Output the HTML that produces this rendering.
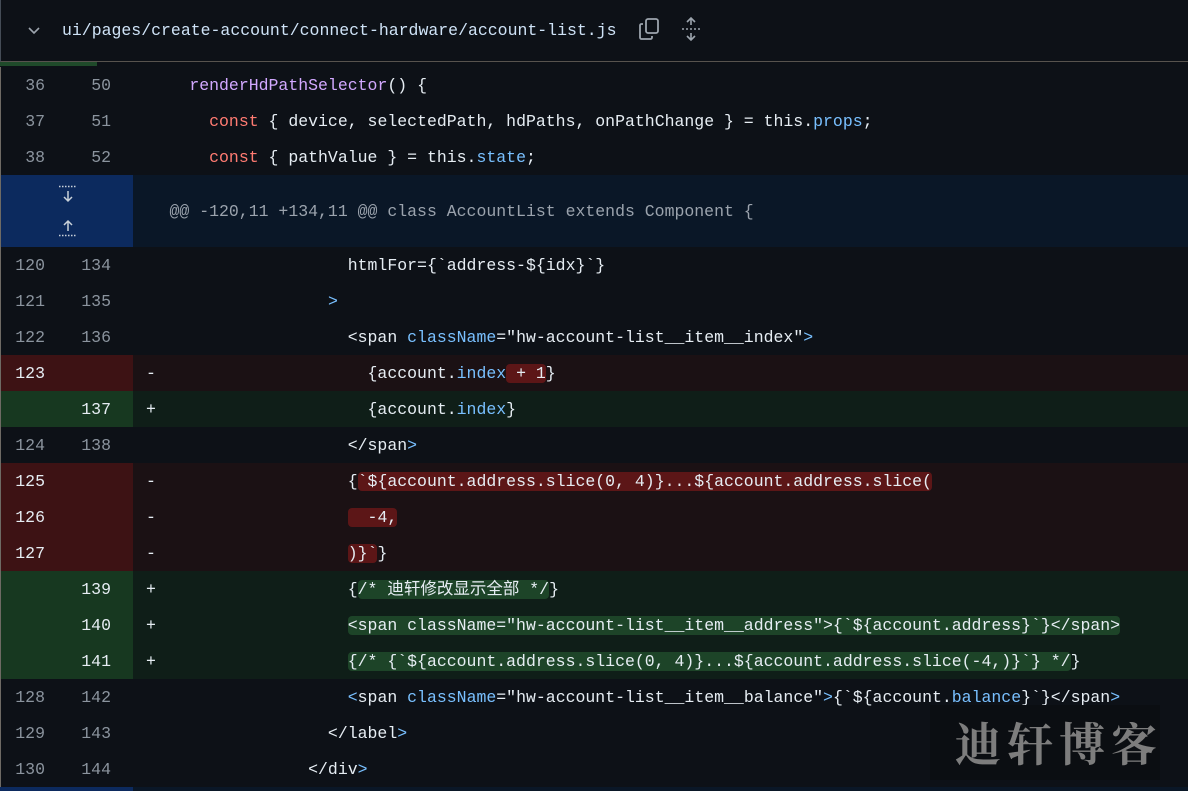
<!DOCTYPE html><html><head><meta charset="utf-8"><style>
body{margin:0;width:1188px;height:791px;background:#0d1117;overflow:hidden;font-family:"Liberation Mono","Noto Sans CJK SC",monospace;font-size:16.5px;color:#e6edf3;position:relative}
.hdr{position:absolute;left:0;top:0;width:1188px;height:62px;background:#0d1117;border-left:1px solid #444c56;border-bottom:1px solid #57534e;box-sizing:border-box}
.r{position:absolute;left:0;width:1188px;height:36px;line-height:38px;border-left:1px solid #6e6a64;box-sizing:border-box}
.o,.n{position:absolute;top:0;width:60px;text-align:right;color:#8b949e}
.o{left:-16px}.n{left:50px}
.g{position:absolute;left:0;top:0;width:132px;height:100%}
.s{position:absolute;left:145px}
.c{position:absolute;left:168.5px;white-space:pre}
.del .g{background:#3d1214}.del{background:#1b1114}.del .o,.del .n{color:#e6edf3}
.add .g{background:#173820}.add{background:#0f1e18}.add .o,.add .n{color:#e6edf3}
.hd{background:#5c1617;border-radius:4px}
.ha{background:#1d4428;border-radius:4px}
.p{color:#d2a8ff}.k{color:#ff7b72}.b{color:#79c0ff}
</style></head><body>
<div class="hdr">
<svg style="position:absolute;left:25px;top:22px" width="16" height="16" viewBox="0 0 16 16"><path d="M3 6l5 5 5-5" fill="none" stroke="#9da5ae" stroke-width="1.6"/></svg>
<div style="position:absolute;left:61px;top:18px;line-height:26px;color:#cfe3f7">ui/pages/create-account/connect-hardware/account-list.js</div>
<svg style="position:absolute;left:636px;top:17px" width="24" height="24" viewBox="0 0 24 24" fill="none" stroke="#9da5ae" stroke-width="1.8"><rect x="9" y="2" width="12" height="14" rx="2"/><path d="M6 7H4.5A1.5 1.5 0 0 0 3 8.5v12A1.5 1.5 0 0 0 4.5 22h9a1.5 1.5 0 0 0 1.5-1.5V19"/></svg>
<svg style="position:absolute;left:679px;top:16px" width="22" height="26" viewBox="0 0 22 26" fill="none" stroke="#9da5ae" stroke-width="1.6"><path d="M11 2v7M7 6l4-4 4 4M11 24v-7M7 20l4 4 4-4"/><path d="M2 13h18" stroke-dasharray="2 2"/></svg>
</div>
<div style="position:absolute;left:0;top:62px;width:97px;height:4px;background:#1f4a2a"></div>
<div class="r" style="top:67px"><span class="o">36</span><span class="n">50</span><span class="c">  <span class="p">renderHdPathSelector</span>() {</span></div>
<div class="r" style="top:103px"><span class="o">37</span><span class="n">51</span><span class="c">    <span class="k">const</span> { device, selectedPath, hdPaths, onPathChange } = this.<span class="b">props</span>;</span></div>
<div class="r" style="top:139px"><span class="o">38</span><span class="n">52</span><span class="c">    <span class="k">const</span> { pathValue } = this.<span class="b">state</span>;</span></div>
<div class="r" style="top:175px;height:72px;background:#0a1727"><div class="g" style="background:#0c2a5e"></div>
<svg style="position:absolute;left:56px;top:10px" width="22" height="52" viewBox="0 0 22 52" fill="none" stroke="#c9d1d9" stroke-width="1.5"><path d="M2 1.5h18" stroke-dasharray="1.5 1.5"/><path d="M11 6v10M7 12l4 4 4-4"/><path d="M11 46v-10M7 40l4-4 4 4"/><path d="M2 50.5h18" stroke-dasharray="1.5 1.5"/></svg>
<span class="c" style="line-height:74px;color:#9ba3ad">@@ -120,11 +134,11 @@ class AccountList extends Component {</span></div>
<div class="r" style="top:247px"><span class="o">120</span><span class="n">134</span><span class="c">                  htmlFor={`address-${idx}`}</span></div>
<div class="r" style="top:283px"><span class="o">121</span><span class="n">135</span><span class="c">                <span class="b">&gt;</span></span></div>
<div class="r" style="top:319px"><span class="o">122</span><span class="n">136</span><span class="c">                  &lt;span <span class="b">className</span>="hw-account-list__item__index"<span class="b">&gt;</span></span></div>
<div class="r del" style="top:355px"><div class="g"></div><span class="o">123</span><span class="s">-</span><span class="c">                    {account.<span class="b">index</span><span class="hd"> + 1</span>}</span></div>
<div class="r add" style="top:391px"><div class="g"></div><span class="n">137</span><span class="s">+</span><span class="c">                    {account.<span class="b">index</span>}</span></div>
<div class="r" style="top:427px"><span class="o">124</span><span class="n">138</span><span class="c">                  &lt;/span<span class="b">&gt;</span></span></div>
<div class="r del" style="top:463px"><div class="g"></div><span class="o">125</span><span class="s">-</span><span class="c">                  {<span class="hd">`${account.address.slice(0, 4)}...${account.address.slice(</span></span></div>
<div class="r del" style="top:499px"><div class="g"></div><span class="o">126</span><span class="s">-</span><span class="c">                  <span class="hd">  -4,</span></span></div>
<div class="r del" style="top:535px"><div class="g"></div><span class="o">127</span><span class="s">-</span><span class="c">                  <span class="hd">)}`</span>}</span></div>
<div class="r add" style="top:571px"><div class="g"></div><span class="n">139</span><span class="s">+</span><span class="c">                  {<span class="ha">/* 迪轩修改显示全部 */</span>}</span></div>
<div class="r add" style="top:607px"><div class="g"></div><span class="n">140</span><span class="s">+</span><span class="c">                  <span class="ha">&lt;span className="hw-account-list__item__address"&gt;{`${account.address}`}&lt;/span&gt;</span></span></div>
<div class="r add" style="top:643px"><div class="g"></div><span class="n">141</span><span class="s">+</span><span class="c">                  <span class="ha">{/* {`${account.address.slice(0, 4)}...${account.address.slice(-4,)}`} */</span>}</span></div>
<div class="r" style="top:679px"><span class="o">128</span><span class="n">142</span><span class="c">                  <span class="b">&lt;</span>span <span class="b">className</span>="hw-account-list__item__balance"<span class="b">&gt;</span>{`${account.<span class="b">balance</span>}`}&lt;/span<span class="b">&gt;</span></span></div>
<div class="r" style="top:715px"><span class="o">129</span><span class="n">143</span><span class="c">                &lt;/label<span class="b">&gt;</span></span></div>
<div class="r" style="top:751px"><span class="o">130</span><span class="n">144</span><span class="c">              &lt;/div<span class="b">&gt;</span></span></div>
<div style="position:absolute;left:0;top:787px;width:133px;height:4px;background:#0c2a5e"></div>
<div style="position:absolute;left:133px;top:787px;width:1055px;height:4px;background:#0a1727"></div>
<div style="position:absolute;left:930px;top:705px;width:230px;height:75px;background:#0b0e12"></div>
<div style="position:absolute;left:955px;top:712px;font-family:'Noto Serif CJK SC',serif;font-weight:bold;font-size:46px;letter-spacing:6px;line-height:60px;color:#7d7d7d">迪轩博客</div>
</body></html>
